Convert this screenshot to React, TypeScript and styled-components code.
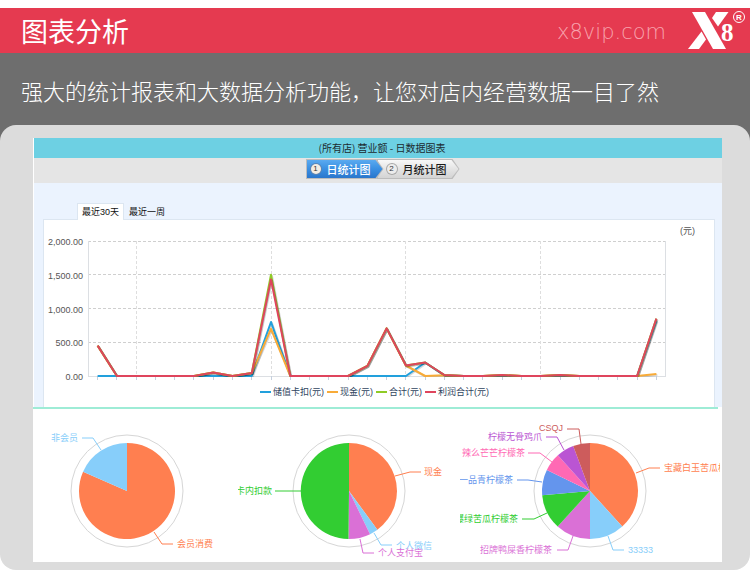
import React from "react";
import styled, { createGlobalStyle, css } from "styled-components";

const GlobalStyle = createGlobalStyle`
  * { box-sizing: border-box; }
  body {
    margin: 0;
    background: #ffffff;
    font-family: "Liberation Sans", "Noto Sans CJK SC", sans-serif;
  }
  button { font: inherit; border: 0; padding: 0; cursor: pointer; }
`;

const Page = styled.div`
  padding-top: 8px;
`;

const Header = styled.header`
  display: flex;
  align-items: center;
  height: 45px;
  padding: 0 2px 0 21px;
  background: #e53a50;
  color: #ffffff;
`;

const Heading = styled.h1`
  flex: 1;
  margin: 0;
  font: 400 27px/45px "Noto Sans CJK SC", sans-serif;
`;

const SiteLink = styled.a`
  margin-right: 20px;
  padding-top: 3px;
  color: #f8a3ae;
  font: 200 21px/28px "DejaVu Sans Light", "DejaVu Sans", sans-serif;
  text-decoration: none;
`;

const LogoImage = styled.svg`
  display: block;
  width: 62px;
  height: 45px;
`;

const Intro = styled.p`
  margin: 0;
  padding: 0 20px 14px 21px;
  background: #6e6e6e;
  color: #ffffff;
  font: 300 22px/74px "Noto Sans CJK SC", sans-serif;
`;

const Frame = styled.main`
  margin-top: -16px;
  padding: 13px 28px 8px 33px;
  border-radius: 16px;
  background: #dcdcdc;
`;

const Screen = styled.div`
  background: #ffffff;
`;

const DayReport = styled.section`
  margin-left: 1px;
  background: #ebf3fe;
`;

const ReportTitle = styled.h2`
  margin: 0;
  padding-left: 8px;
  background: #6dd0e3;
  color: #1c2b30;
  font: 400 10px/20px "Noto Sans CJK SC", sans-serif;
  text-align: center;
`;

const StepBar = styled.nav`
  display: flex;
  justify-content: center;
  height: 25px;
  padding: 1px 0 0 9px;
  background: #e5e5e5;
`;

const arrow = "polygon(0 0, calc(100% - 7px) 0, 100% 50%, calc(100% - 7px) 100%, 0 100%)";

const Step = styled.button<{ $active?: boolean }>`
  position: relative;
  display: flex;
  align-items: center;
  gap: 6px;
  height: 20px;
  padding: 0 13px 0 ${(p) => (p.$active ? 5 : 10)}px;
  margin-left: ${(p) => (p.$active ? 0 : -7)}px;
  z-index: ${(p) => (p.$active ? 1 : 0)};
  clip-path: ${arrow};
  background: #bcbcbc;
  color: ${(p) => (p.$active ? "#ffffff" : "#1c1c1c")};
  font: 500 11px/20px "Noto Sans CJK SC", sans-serif;

  &::before {
    content: "";
    position: absolute;
    z-index: -1;
    inset: 1px;
    clip-path: ${arrow};
    background: ${(p) =>
      p.$active
        ? "linear-gradient(#5aaaf0, #3a8fe2 50%, #2a76cc)"
        : "linear-gradient(#f8f8f8, #e4e4e4 50%, #d4d4d4)"};
  }
`;

const StepNumber = styled.span<{ $active?: boolean }>`
  width: 10px;
  height: 10px;
  border-radius: 50%;
  font: 400 8px/10px "Liberation Sans", sans-serif;
  text-align: center;
  color: #333333;
  ${(p) =>
    p.$active
      ? css`background: #f3ece2; box-shadow: 0 0 0 1px #5b84b3;`
      : css`background: #ececec; box-shadow: 0 0 0 1px #a8a8a8;`}
`;

const Tabs = styled.div`
  display: flex;
  padding: 20px 0 0 43px;
`;

const Tab = styled.button<{ $active?: boolean }>`
  position: relative;
  height: 17px;
  margin-bottom: -1px;
  padding: 0 4px;
  border: 1px solid transparent;
  border-bottom: 0;
  background: transparent;
  color: #111111;
  font: 400 9px/14px "Liberation Sans", "Noto Sans CJK SC", sans-serif;
  ${(p) => p.$active && css`background: #ffffff; border-color: #dce6f1;`}
`;

const ChartPanel = styled.div`
  margin: 0 7px 0 9px;
  padding-bottom: 6px;
  border: 1px solid #dce6f1;
  border-bottom: 0;
  background: #ffffff;
`;

const Drawing = styled.svg`
  display: block;
  width: 100%;
  height: auto;
  overflow: hidden;
  font-family: "Liberation Sans", "Noto Sans CJK SC", sans-serif;
  font-size: 9px;
`;

const Legend = styled.ul`
  display: flex;
  justify-content: center;
  gap: 3px;
  margin: 0;
  padding: 0 9px 0 0;
  list-style: none;
  color: #2f4560;
  font: 400 9px/18px "Liberation Sans", "Noto Sans CJK SC", sans-serif;
`;

const LegendItem = styled.li<{ $color: string }>`
  display: flex;
  align-items: center;
  gap: 2px;
  &::before {
    content: "";
    width: 11px;
    height: 2px;
    background: ${(p) => p.$color};
  }
`;

const Pies = styled.section`
  display: grid;
  grid-template-columns: 205fr 222fr 260fr;
  padding-right: 2px;
`;

const Divider = styled.hr`
  height: 2px;
  margin: 0 4px 0 0;
  border: 0;
  background: #9eecd6;
`;

/* ---------- line chart ---------- */

type Spikes = Record<number, number>;
type Series = { name: string; color: string; spikes: Spikes };

const common: Spikes = { 0: 450, 6: 50, 8: 45, 14: 150, 15: 705, 16: 155, 17: 200, 18: 15, 21: 15, 24: 15, 29: 850 };

const series: Series[] = [
  { name: "储值卡扣(元)", color: "#22a0dc", spikes: { 9: 800, 17: 200, 18: 10, 29: 820 } },
  { name: "现金(元)", color: "#f8ab38", spikes: { 0: 450, 6: 50, 8: 45, 9: 700, 14: 150, 15: 705, 16: 155, 18: 10, 21: 15, 24: 15, 29: 30 } },
  { name: "合计(元)", color: "#8fcb26", spikes: { ...common, 9: 1500 } },
  { name: "利润合计(元)", color: "#df455d", spikes: { ...common, 9: 1430 } },
];

const plot = { left: 44, right: 622, top: 21, bottom: 156 };
const days = Array.from({ length: 30 }, (_, i) => i);
const dayX = (i: number) => plot.left + ((plot.right - plot.left) / 30) * (i + 0.5);
const valueY = (v: number) => plot.bottom - (v / 2000) * (plot.bottom - plot.top);
const linePoints = (spikes: Spikes) =>
  days.map((i) => `${dayX(i).toFixed(1)},${valueY(spikes[i] ?? 0).toFixed(1)}`).join(" ");

function LineChart() {
  return (
    <Drawing viewBox="0 0 670 163" role="img" aria-label="日数据图表">
      <clipPath id="plot-area">
        <rect x={plot.left} y="0" width="600" height={plot.bottom + 1} />
      </clipPath>
      <g shapeRendering="crispEdges" stroke="#cfcfcf" fill="none">
        {[500, 1000, 1500, 2000].map((v) => (
          <path key={v} strokeDasharray="3 2" d={`M${plot.left} ${Math.floor(valueY(v)) + 0.5}H${plot.right}`} />
        ))}
        {[2, 9, 16, 23].map((i) => (
          <path key={i} stroke="#dedede" strokeDasharray="3 2" d={`M${Math.floor(dayX(i)) + 0.5} ${plot.top}V${plot.bottom}`} />
        ))}
        <path stroke="#dcdfe3" d={`M${plot.left + 0.5} ${plot.top}V${plot.bottom + 0.5}H${plot.right - 0.5}V${plot.top}`} />
        {days.map((i) => (
          <path key={i} stroke="#c5d0de" d={`M${Math.floor(dayX(i)) + 0.5} ${plot.bottom}v4`} />
        ))}
      </g>
      <g fill="#555555" textAnchor="end">
        {["0.00", "500.00", "1,000.00", "1,500.00", "2,000.00"].map((label, i) => (
          <text key={label} x="39" y={Math.round(valueY(i * 500)) + 4}>{label}</text>
        ))}
      </g>
      <text x="636" y="14" fill="#555555">(元)</text>
      <g fill="none" strokeLinejoin="round" clipPath="url(#plot-area)">
        {series.map((s) => (
          <g key={s.name}>
            <polyline points={linePoints(s.spikes)} transform="translate(1 1)" stroke="#000000" strokeOpacity="0.15" strokeWidth="2" />
            <polyline points={linePoints(s.spikes)} stroke={s.color} strokeWidth="2" />
          </g>
        ))}
      </g>
    </Drawing>
  );
}

/* ---------- pie charts ---------- */

type Slice = {
  label: string;
  color: string;
  end: number;
  leader: string;
  x: number;
  y: number;
  before?: boolean;
};

const memberSlices: Slice[] = [
  { label: "会员消费", color: "#ff7f50", end: 293.8, leader: "121,123 129,135 140,135", x: 144, y: 135 },
  { label: "非会员", color: "#87cefa", end: 360, leader: "68,41 60,29 49,29", x: 45, y: 29, before: true },
];

const paymentSlices: Slice[] = [
  { label: "现金", color: "#ff7f50", end: 143.8, leader: "157,67 172,63 183,63", x: 186, y: 63 },
  { label: "个人微信", color: "#87cefa", end: 154, leader: "136,124 143,136 154,136", x: 158, y: 137 },
  { label: "个人支付宝", color: "#da70d6", end: 180.6, leader: "122,130 125,144 136,144", x: 140, y: 144 },
  { label: "卡内扣款", color: "#32cd32", end: 360, leader: "63,82 37,82", x: 34, y: 82, before: true },
];

const productSlices: Slice[] = [
  { label: "宝藏白玉苦瓜柠檬茶", color: "#ff7f50", end: 137.8, leader: "176,64 189,59 200,59", x: 204, y: 59 },
  { label: "33333", color: "#87cefa", end: 180, leader: "148,127 153,141 164,141", x: 168, y: 141 },
  { label: "招牌鸭屎香柠檬茶", color: "#da70d6", end: 222.3, leader: "113,127 108,141 97,141", x: 92, y: 141, before: true },
  { label: "爆绿苦瓜柠檬茶", color: "#32cd32", end: 265, leader: "87,104 74,110 62,110", x: 58, y: 110, before: true },
  { label: "一品青柠檬茶", color: "#6495ed", end: 296, leader: "82,73 68,71 57,71", x: 53, y: 71, before: true },
  { label: "辣么芒芒柠檬茶", color: "#ff69b4", end: 318, leader: "92,53 80,44 68,44", x: 65, y: 44, before: true },
  { label: "柠檬无骨鸡爪", color: "#ba55d3", end: 339.5, leader: "104,41 97,28 86,28", x: 82, y: 28, before: true },
  { label: "CSQJ", color: "#cd5c5c", end: 360, leader: "121,35 119,20 107,20", x: 103, y: 19, before: true },
];

const pieY = 82;
const pieRadius = 48;

function slicePath(cx: number, start: number, end: number) {
  const at = (deg: number) => {
    const a = (deg * Math.PI) / 180;
    return `${(cx + pieRadius * Math.sin(a)).toFixed(2)} ${(pieY - pieRadius * Math.cos(a)).toFixed(2)}`;
  };
  return `M${cx} ${pieY}L${at(start)}A${pieRadius} ${pieRadius} 0 ${end - start > 180 ? 1 : 0} 1 ${at(end)}Z`;
}

function Pie({ width, cx, slices, title }: { width: number; cx: number; slices: Slice[]; title: string }) {
  return (
    <Drawing viewBox={`0 0 ${width} 153`} role="img" aria-label={title}>
      <circle cx={cx} cy={pieY} r="56" fill="none" stroke="#d6d6d6" />
      {slices.map((s, i) => (
        <path key={s.label} fill={s.color} d={slicePath(cx, i ? slices[i - 1].end : 0, s.end)} />
      ))}
      {slices.map((s) => (
        <g key={s.label}>
          <polyline points={s.leader} fill="none" stroke={s.color} />
          <text x={s.x} y={s.y + 3} fill={s.color} textAnchor={s.before ? "end" : "start"}>{s.label}</text>
        </g>
      ))}
    </Drawing>
  );
}

function Logo() {
  return (
    <LogoImage viewBox="0 0 62 45" role="img" aria-label="X8">
      <g fill="#ffffff">
        <path d="M6 4H19L40 41H27Z" />
        <path d="M30 4H42.500L32 18.500L26 10Z" />
        <path d="M2 41H13L20 31.500L15.500 23.500Z" />
        <text x="35" y="33" fontFamily="Liberation Serif, serif" fontWeight="700" fontSize="25" stroke="#e53a50" strokeWidth="2" paintOrder="stroke">8</text>
        <text x="53" y="12" fontFamily="Liberation Sans, sans-serif" fontWeight="700" fontSize="8" textAnchor="middle">R</text>
      </g>
      <circle cx="53" cy="9" r="5.500" fill="none" stroke="#ffffff" />
    </LogoImage>
  );
}

export default function App() {
  return (
    <Page>
      <GlobalStyle />
      <Header>
        <Heading>图表分析</Heading>
        <SiteLink href="#home">x8vip.com</SiteLink>
        <Logo />
      </Header>
      <Intro>强大的统计报表和大数据分析功能，让您对店内经营数据一目了然</Intro>
      <Frame>
        <Screen>
          <DayReport>
            <ReportTitle>(所有店) 营业额 - 日数据图表</ReportTitle>
            <StepBar>
              <Step type="button" $active><StepNumber $active>1</StepNumber>日统计图</Step>
              <Step type="button"><StepNumber>2</StepNumber>月统计图</Step>
            </StepBar>
            <Tabs role="tablist">
              <Tab type="button" role="tab" aria-selected="true" $active>最近30天</Tab>
              <Tab type="button" role="tab" aria-selected="false">最近一周</Tab>
            </Tabs>
            <ChartPanel>
              <LineChart />
              <Legend>
                {series.map((s) => (
                  <LegendItem key={s.name} $color={s.color}>{s.name}</LegendItem>
                ))}
              </Legend>
            </ChartPanel>
          </DayReport>
          <Divider />
          <Pies>
            <Pie width={205} cx={94} slices={memberSlices} title="会员消费占比" />
            <Pie width={222} cx={111} slices={paymentSlices} title="支付方式占比" />
            <Pie width={260} cx={130} slices={productSlices} title="商品销售占比" />
          </Pies>
        </Screen>
      </Frame>
    </Page>
  );
}
